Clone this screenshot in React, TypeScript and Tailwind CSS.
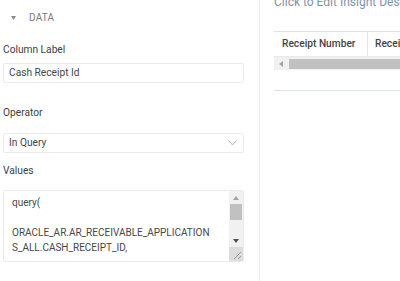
export default function App() {
  return (
    <div
      className="flex h-[281px] w-[400px] overflow-hidden bg-white text-[#404040]"
      style={{ fontFamily: "Roboto, 'Liberation Sans', sans-serif" }}
    >
      {/* left settings panel */}
      <div className="w-[260px] shrink-0 border-r border-[#ececec] pl-[3px]">
        <div className="mt-[8px] flex h-[19px] items-center text-[10px] text-[#7a7a7a]">
          <svg width="5" height="4" viewBox="0 0 5 4" className="ml-[8px]">
            <polygon points="0,0 5,0 2.5,4" fill="#8a8a8a" />
          </svg>
          <span className="ml-[13px] tracking-[0.2px]">DATA</span>
        </div>

        <div className="mt-[16px] h-[14px] text-[10.2px] leading-[14px]">Column Label</div>
        <div className="mt-[6px] flex h-[20px] w-[241px] items-center rounded-[2px] border border-[#ebebeb] pl-[5px] text-[10.2px] text-[#474747]">
          Cash Receipt Id
        </div>

        <div className="mt-[23px] h-[14px] text-[10.2px] leading-[14px]">Operator</div>
        <div className="mt-[13px] flex h-[20px] w-[241px] items-center justify-between rounded-[2px] border border-[#ebebeb] pl-[5px] pr-[6px] text-[10.2px] text-[#474747]">
          <span>In Query</span>
          <svg width="9" height="6" viewBox="0 0 9 6">
            <polyline points="0.5,0.5 4.5,5 8.5,0.5" fill="none" stroke="#a8a8a8" strokeWidth="0.9" />
          </svg>
        </div>

        <div className="mt-[11px] h-[14px] text-[10.2px] leading-[14px]">Values</div>
        <div className="mt-[12px] flex h-[72px] w-[241px] overflow-hidden rounded-[2px] border border-[#ebebeb]">
          <div className="flex-1 overflow-hidden pl-[8px] pt-[4px] text-[10px] leading-[15px] text-[#474747]">
            <div className="w-[203px] break-all whitespace-pre-wrap">
              {"query(\n\nORACLE_AR.AR_RECEIVABLE_APPLICATIONS_ALL.CASH_RECEIPT_ID,"}
            </div>
          </div>
          <div className="flex w-[14px] flex-col bg-[#f1f1f1]">
            <div className="flex h-[13px] items-center justify-center">
              <svg width="6" height="4" viewBox="0 0 6 4">
                <polygon points="0,4 6,4 3,0" fill="#a3a3a3" />
              </svg>
            </div>
            <div className="mx-[1px] h-[16px] bg-[#c1c1c1]" />
            <div className="flex-1" />
            <div className="flex h-[13px] items-center justify-center">
              <svg width="6" height="4" viewBox="0 0 6 4">
                <polygon points="0,0 6,0 3,4" fill="#505050" />
              </svg>
            </div>
            <div className="h-[14px] bg-[#dcdcdc]">
              <svg width="14" height="14" viewBox="0 0 14 14">
                <line x1="12" y1="5" x2="5" y2="12" stroke="#8a8a8a" strokeWidth="0.8" />
                <line x1="12" y1="9" x2="9" y2="12" stroke="#8a8a8a" strokeWidth="0.8" />
              </svg>
            </div>
          </div>
        </div>
      </div>

      {/* right preview panel */}
      <div className="min-w-0 flex-1 pl-[14px]">
        <div className="-mt-[5px] h-[14px] whitespace-nowrap text-[12px] leading-[14px] text-[#7f91a8]">
          Click to Edit Insight Description
        </div>
        <div className="mt-[22px] border-t border-[#dde2e8]">
          <div className="flex h-[25px] items-center border-b border-[#e6e9ee] text-[10.2px] font-medium whitespace-nowrap text-[#444]">
            <div className="flex h-full w-[94px] shrink-0 items-center border-r border-[#e3e6ea] pl-[8px]">
              Receipt Number
            </div>
            <div className="pl-[7px]">Receipt Date</div>
          </div>
          <div className="flex h-[13px] items-center bg-[#f1f1f1]">
            <svg width="4" height="6" viewBox="0 0 4 6" className="ml-[5px]">
              <polygon points="4,0 4,6 0,3" fill="#a3a3a3" />
            </svg>
            <div className="ml-[6px] h-[10px] flex-1 bg-[#c1c1c1]" />
          </div>
        </div>
        <div className="mt-[20px] border-t border-[#dde2e8]" />
      </div>
    </div>
  );
}
